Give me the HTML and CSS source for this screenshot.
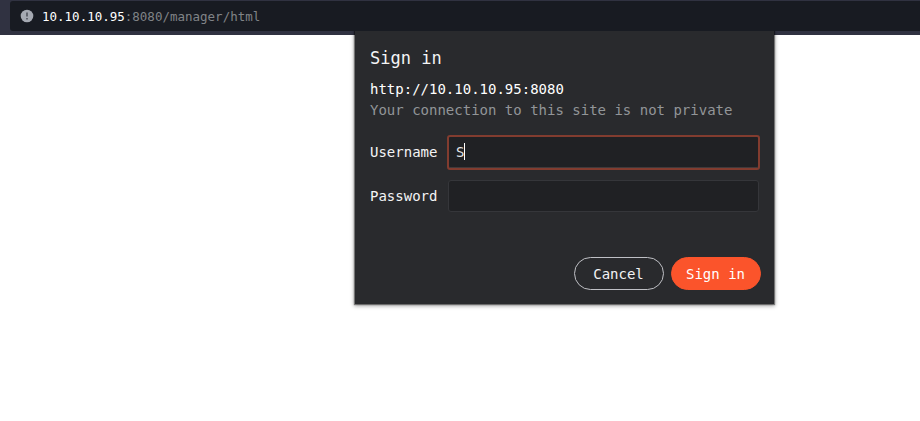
FILE: index.html
```html
<!DOCTYPE html>
<html lang="en">
<head>
<meta charset="utf-8">
<title>Sign in</title>
<link rel="stylesheet" href="styles.css">
</head>
<body>
<header class="toolbar">
  <div class="address">
    <svg class="info" viewBox="0 0 14 14" width="14" height="14">
      <circle cx="7" cy="7" r="6.3" fill="#a5a9b2"/>
      <path d="M7 3.6v3.8M7 8.9v1.6" stroke="#50545d" stroke-width="1.6"/>
    </svg>
    <span class="url"><span class="host">10.10.10.95</span>:8080/manager/html</span>
  </div>
</header>
<form class="dialog">
  <h1 class="title">Sign in</h1>
  <p class="origin">http://10.10.10.95:8080</p>
  <p class="notice">Your connection to this site is not private</p>
  <div class="row row-user">
    <span class="label">Username</span>
    <div class="field focused">S<i class="caret"></i></div>
  </div>
  <div class="row">
    <span class="label">Password</span>
    <div class="field"></div>
  </div>
  <div class="actions">
    <button type="button" class="button cancel">Cancel</button>
    <button type="button" class="button submit">Sign in</button>
  </div>
</form>
</body>
</html>
```
FILE: styles.css
```css
* { box-sizing: border-box; }
body {
  margin: 0;
  height: 421px;
  overflow: hidden;
  background: #fff;
  font-family: "DejaVu Sans Mono", monospace;
  font-size: 14px;
}
.toolbar {
  height: 35px;
  padding: 1px 0 4px 10px;
  background: #303241;
}
.address {
  height: 30px;
  display: flex;
  align-items: center;
  padding-left: 10px;
  background: #181b22;
  border-radius: 3px 0 0 3px;
}
.info { display: block; margin: -1px 8px 0 0; }
.url {
  padding-top: 2px;
  font-size: 12.5px;
  line-height: 16px;
  color: #808387;
  white-space: pre;
}
.host { color: #fff; }
/* The dialog hangs over the page from the address field. */
.dialog {
  position: absolute;
  left: 355px;
  top: 31px;
  width: 419px;
  height: 273px;
  padding: 16px 13px 14px 15px;
  background: #292a2d;
  color: #f4f4f5;
  box-shadow: 0 0 1px 1px rgba(0, 0, 0, .42), 0 1px 4px 1px rgba(0, 0, 0, .36);
  clip-path: inset(0 -8px -8px -8px);
}
.title {
  margin: 0;
  font-size: 17px;
  line-height: 22px;
  font-weight: 400;
}
.origin { margin: 10px 0 0; line-height: 20px; color: #fff; }
.notice { margin: 1px 0 0; line-height: 20px; color: #929598; white-space: nowrap; }
.row {
  display: flex;
  align-items: center;
  height: 35px;
}
.row-user { margin: 15px 0 8px; }
.label { width: 78px; }
.row-user .label { padding-bottom: 2px; }
.field {
  display: flex;
  align-items: center;
  width: 311px;
  height: 32px;
  padding-left: 7px;
  background: #202124;
  border: 1px solid #35363a;
  border-radius: 3px;
  color: #e3e5e8;
}
.focused {
  box-shadow: inset 0 -1px #413a3b;
  width: 313px;
  height: 35px;
  margin-left: -1px;
  padding-bottom: 2px;
  border: 2px solid #823c2f;
}
.caret { width: 1px; height: 17px; background: #fff; }
.actions {
  display: flex;
  justify-content: flex-end;
  gap: 7px;
  margin-top: 44px;
}
.button {
  width: 90px;
  height: 33px;
  padding: 0 1px 0 0;
  border: 1px solid #bfc0c5;
  border-radius: 17px;
  background: transparent;
  color: #f2f2f4;
  font: inherit;
}
.submit { background: #fb542b; border-color: #fb542b; color: #fff; }
```
